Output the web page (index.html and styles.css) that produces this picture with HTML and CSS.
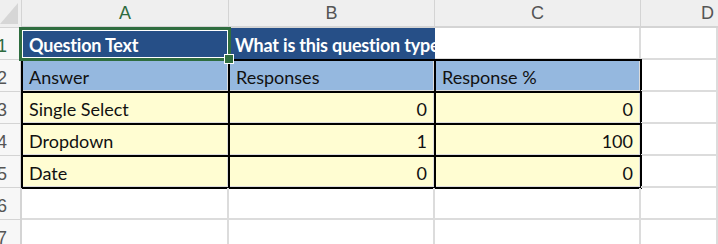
FILE: index.html
```html
<!DOCTYPE html>
<html>
<head>
<meta charset="utf-8">
<link rel="stylesheet" href="styles.css">
</head>
<body>
<div class="sheet">
  <div class="corner"><svg class="corner-tri" width="22" height="28" viewBox="0 0 22 28"><polygon points="18,3 18,24 0,24" fill="#d6d6d6"/></svg></div>
  <div class="colhdr sel">A</div>
  <div class="colhdr">B</div>
  <div class="colhdr">C</div>
  <div class="colhdr edge">D</div>

  <div class="rowhdr sel"><span>1</span></div>
  <div class="cell title active">Question Text<span class="handle"></span></div>
  <div class="cell title clip">What is this question type</div>
  <div class="cell"></div>
  <div class="cell"></div>

  <div class="rowhdr"><span>2</span></div>
  <div class="cell head tb">Answer</div>
  <div class="cell head tb">Responses</div>
  <div class="cell head tb">Response %</div>
  <div class="cell"></div>

  <div class="rowhdr"><span>3</span></div>
  <div class="cell data tb">Single Select</div>
  <div class="cell data tb num">0</div>
  <div class="cell data tb num">0</div>
  <div class="cell"></div>

  <div class="rowhdr"><span>4</span></div>
  <div class="cell data tb">Dropdown</div>
  <div class="cell data tb num">1</div>
  <div class="cell data tb num">100</div>
  <div class="cell"></div>

  <div class="rowhdr"><span>5</span></div>
  <div class="cell data tb">Date</div>
  <div class="cell data tb num">0</div>
  <div class="cell data tb num">0</div>
  <div class="cell"></div>

  <div class="rowhdr"><span>6</span></div>
  <div class="cell"></div>
  <div class="cell"></div>
  <div class="cell"></div>
  <div class="cell"></div>

  <div class="rowhdr"><span>7</span></div>
  <div class="cell"></div>
  <div class="cell"></div>
  <div class="cell"></div>
  <div class="cell"></div>
</div>
</body>
</html>
```

FILE: styles.css
```css
html, body {
  margin: 0;
  padding: 0;
  background: #ffffff;
  overflow: hidden;
}

.sheet {
  display: grid;
  grid-template-columns: 22px 207px 206px 206px 1fr;
  grid-template-rows: 28px repeat(7, 32px);
  width: 100%;
}

.corner {
  background: #efefef;
  border-right: 1px solid #d4d4d4;
  border-bottom: 1px solid #d4d4d4;
  box-sizing: border-box;
  overflow: hidden;
}

.corner-tri {
  display: block;
}

.colhdr {
  background: #efefef;
  border-right: 1px solid #d4d4d4;
  border-bottom: 2px solid #d4d4d4;
  box-sizing: border-box;
  display: flex;
  align-items: center;
  justify-content: center;
  font-family: "Liberation Sans", Arial, sans-serif;
  font-size: 18px;
  color: #555555;
  padding-top: 1px;
}

.colhdr.sel {
  color: #2e6b3f;
}

.colhdr.edge {
  justify-content: flex-end;
  padding-right: 4px;
  border-right: none;
}

.rowhdr {
  background: #f7f7f7;
  border-right: 2px solid #d4d4d4;
  border-bottom: 1px solid #d4d4d4;
  box-sizing: border-box;
  overflow: hidden;
  display: flex;
  align-items: center;
  justify-content: flex-end;
  font-family: "Liberation Sans", Arial, sans-serif;
  font-size: 18px;
  color: #555555;
}

.rowhdr span {
  margin-right: 13px;
  padding-top: 5px;
}

.rowhdr.sel {
  color: #2e6b3f;
}

.cell {
  border-right: 2px solid #dcdcdc;
  border-bottom: 2px solid #dcdcdc;
  box-sizing: border-box;
  display: flex;
  align-items: flex-end;
  padding: 0 6px 2px 7px;
  font-family: Lato, "Open Sans", sans-serif;
  font-size: 18px;
  color: #111111;
  white-space: nowrap;
  overflow: visible;
}

.title {
  background: #264f87;
  color: #ffffff;
  font-weight: bold;
  border-color: #264f87;
  letter-spacing: -0.2px;
}

.clip {
  overflow: hidden;
  padding-left: 6px;
  border-right: none;
}

.active {
  position: relative;
}

.active::after {
  content: "";
  position: absolute;
  left: -3px;
  top: -1px;
  right: -4px;
  bottom: -3px;
  border: 3px solid #2f6d3f;
  box-shadow: inset 0 0 0 1px #ffffff;
  pointer-events: none;
}

.handle {
  position: absolute;
  right: -7px;
  bottom: -6px;
  width: 8px;
  height: 8px;
  background: #2f6d3f;
  border: 1px solid #ffffff;
  z-index: 2;
}

.head {
  background: #95b8df;
}

.data {
  background: #fffdd2;
}

.num {
  justify-content: flex-end;
}

.tb {
  outline: 2px solid #000000;
  outline-offset: -1px;
}
```
